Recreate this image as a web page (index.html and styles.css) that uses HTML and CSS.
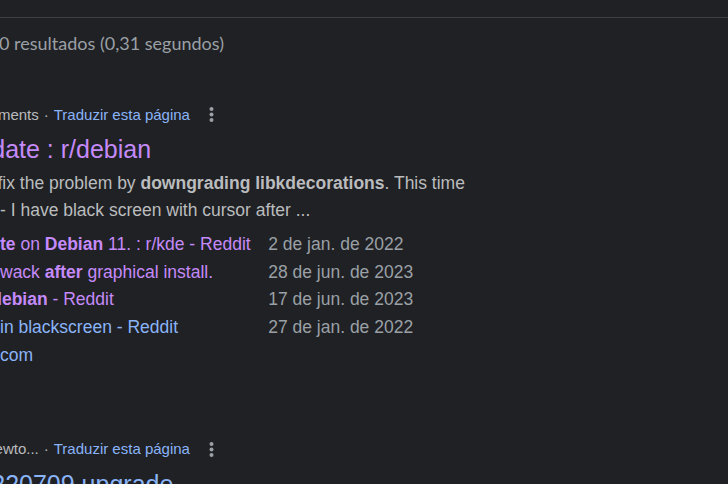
FILE: index.html
```html
<!DOCTYPE html>
<html lang="pt">
<head>
<meta charset="utf-8">
<title>Resultados</title>
<link rel="stylesheet" href="styles.css">
</head>
<body>
<header class="topbar"></header>
<p class="stats">0 resultados (0,31 segundos)</p>
<main>
  <article class="result">
    <div class="source"><cite>ments</cite><span class="dot">·</span><a href="#">Traduzir esta página</a>
      <button class="more" aria-label="Mais opções"><svg viewBox="0 0 4 12"><circle cx="2" cy="1.6" r="1.6"/><circle cx="2" cy="6" r="1.6"/><circle cx="2" cy="10.4" r="1.6"/></svg></button>
    </div>
    <h3 class="clipped"><a class="visited" href="#">date : r/debian</a></h3>
    <p class="snippet">fix the problem by <b>downgrading libkdecorations</b>. This time<br>- I have black screen with cursor after ...</p>
    <table class="threads">
      <tr><td><a class="visited" href="#"><b>te</b> on <b>Debian</b> 11. : r/kde - Reddit</a></td><td>2 de jan. de 2022</td></tr>
      <tr><td><a class="visited" href="#">wack <b>after</b> graphical install.</a></td><td>28 de jun. de 2023</td></tr>
      <tr><td class="clipped"><a class="visited" href="#"><b>debian</b> - Reddit</a></td><td>17 de jun. de 2023</td></tr>
      <tr><td><a href="#">in blackscreen - Reddit</a></td><td>27 de jan. de 2022</td></tr>
      <tr><td><a href="#">com</a></td><td></td></tr>
    </table>
  </article>
  <article class="result">
    <div class="source"><cite>ewto...</cite><span class="dot">·</span><a href="#">Traduzir esta página</a>
      <button class="more" aria-label="Mais opções"><svg viewBox="0 0 4 12"><circle cx="2" cy="1.6" r="1.6"/><circle cx="2" cy="6" r="1.6"/><circle cx="2" cy="10.4" r="1.6"/></svg></button>
    </div>
    <h3 class="clipped"><a href="#">220709 upgrade</a></h3>
  </article>
</main>
</body>
</html>
```
FILE: styles.css
```css
html {
  background: #202124;
  overflow: hidden;
}

body {
  height: 100vh;
  margin: 0;
  overflow: hidden;
  color: #babcbe;
  font: 14px/1.58 "Liberation Sans", Arial, sans-serif;
}

main {
  zoom: 1.25;
}

a {
  color: #8ab4f8;
  text-decoration: none;
}

a.visited {
  color: #c58af9;
}

.topbar {
  height: 17px;
  border-bottom: 1px solid #3c4043;
}

.stats {
  margin: 0 0 33px;
  color: #9aa0a6;
  font-family: Lato, sans-serif;
  font-size: 18px;
  line-height: 51px;
  text-indent: -1px;
}

.result {
  margin-bottom: 54px;
  white-space: nowrap;
}

.source {
  display: flex;
  align-items: center;
  height: 20px;
  font-size: 12px;
}

.source cite {
  display: flex;
  justify-content: flex-end;
  width: 31px;
  font-style: normal;
}

.dot {
  width: 12px;
  text-align: center;
}

.more {
  display: flex;
  margin: 0 0 0 15px;
  padding: 0;
  border: 0;
  background: none;
}

.more svg {
  width: 4px;
  height: 12px;
  fill: #9aa0a6;
}

h3 {
  margin: 5px 0 3px;
  font-size: 20px;
  font-weight: 400;
  line-height: 26px;
}

.clipped {
  text-indent: -7px;
}

.snippet {
  margin: 0 0 5px;
  text-indent: -2px;
}

.threads {
  border-collapse: collapse;
  color: #9aa0a6;
}

.threads td {
  padding: 0 14px 0 0;
}
```
